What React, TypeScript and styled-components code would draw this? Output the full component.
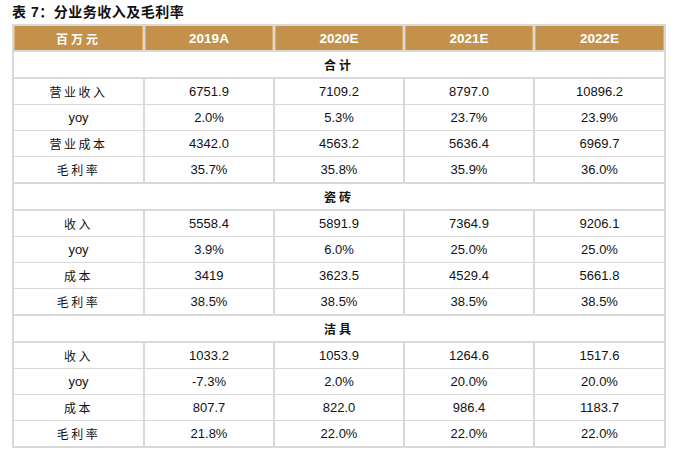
import React from 'react';
import styled, { createGlobalStyle } from 'styled-components';

const GlobalStyle = createGlobalStyle`
  body {
    margin: 0;
    background: #ffffff;
    font-family: "Liberation Sans", "Noto Sans CJK SC", sans-serif;
    color: #111;
  }
`;

const Page = styled.div`
  width: 680px;
  height: 465px;
  padding: 3px 0 0 12px;
  box-sizing: border-box;
`;

const Title = styled.div`
  font-family: "Liberation Sans", "Noto Sans CJK SC", sans-serif;
  font-weight: 700;
  font-size: 14px;
  line-height: 18px;
  height: 21px;
  letter-spacing: 0.5px;
  color: #111;
`;

const Table = styled.table`
  width: 652px;
  border-collapse: collapse;
  table-layout: fixed;
  border: 2px solid #d9d9d9;
`;

const Row = styled.tr`
  height: 26.4px;
`;

const HeadCell = styled.th`
  background: #c4914a;
  color: #ffffff;
  font-weight: 700;
  font-size: 13.5px;
  padding: 0;
  border: 2px solid #d9d9d9;
  border-top-width: 1px;
  text-align: center;
  box-shadow: inset 9px 0 0 -8px #dcae6e, inset -9px 0 0 -8px #dcae6e;
`;

const HeadLabel = styled.span<{ $cjk?: boolean }>`
  font-family: ${p => (p.$cjk ? '"Noto Sans CJK SC", sans-serif' : '"Liberation Sans", sans-serif')};
  font-size: ${p => (p.$cjk ? '12px' : '13.5px')};
  letter-spacing: ${p => (p.$cjk ? '3px' : '0')};
`;

const SectionCell = styled.td`
  text-align: center;
  font-family: "Noto Sans CJK SC", sans-serif;
  font-weight: 700;
  font-size: 12px;
  letter-spacing: 3px;
  padding: 0;
  border: 2px solid #d9d9d9;
  border-left: none;
  border-right: none;
`;

const Cell = styled.td<{ $label?: boolean }>`
  text-align: center;
  padding: 0;
  font-size: ${p => (p.$label ? '12px' : '13px')};
  font-family: ${p =>
    p.$label ? '"Liberation Sans", "Noto Sans CJK SC", sans-serif' : '"Liberation Sans", sans-serif'};
  letter-spacing: ${p => (p.$label ? '2.5px' : '0')};
  color: #111;
  border: 2px solid #d9d9d9;
  border-top-width: 1px;
  border-bottom-width: 1px;
`;

const years = ['2019A', '2020E', '2021E', '2022E'];

const sections: { name: string; rows: [string, string[]][] }[] = [
  {
    name: '合计',
    rows: [
      ['营业收入', ['6751.9', '7109.2', '8797.0', '10896.2']],
      ['yoy', ['2.0%', '5.3%', '23.7%', '23.9%']],
      ['营业成本', ['4342.0', '4563.2', '5636.4', '6969.7']],
      ['毛利率', ['35.7%', '35.8%', '35.9%', '36.0%']],
    ],
  },
  {
    name: '瓷砖',
    rows: [
      ['收入', ['5558.4', '5891.9', '7364.9', '9206.1']],
      ['yoy', ['3.9%', '6.0%', '25.0%', '25.0%']],
      ['成本', ['3419', '3623.5', '4529.4', '5661.8']],
      ['毛利率', ['38.5%', '38.5%', '38.5%', '38.5%']],
    ],
  },
  {
    name: '洁具',
    rows: [
      ['收入', ['1033.2', '1053.9', '1264.6', '1517.6']],
      ['yoy', ['-7.3%', '2.0%', '20.0%', '20.0%']],
      ['成本', ['807.7', '822.0', '986.4', '1183.7']],
      ['毛利率', ['21.8%', '22.0%', '22.0%', '22.0%']],
    ],
  },
];

export default function App() {
  return (
    <Page>
      <GlobalStyle />
      <Title>表 7：分业务收入及毛利率</Title>
      <Table>
        <colgroup>
          <col style={{ width: 131 }} />
          <col style={{ width: 130 }} />
          <col style={{ width: 130 }} />
          <col style={{ width: 130 }} />
          <col style={{ width: 131 }} />
        </colgroup>
        <thead>
          <Row>
            <HeadCell>
              <HeadLabel $cjk>百万元</HeadLabel>
            </HeadCell>
            {years.map(y => (
              <HeadCell key={y}>
                <HeadLabel>{y}</HeadLabel>
              </HeadCell>
            ))}
          </Row>
        </thead>
        <tbody>
          {sections.map(s => (
            <React.Fragment key={s.name}>
              <Row>
                <SectionCell colSpan={5}>{s.name}</SectionCell>
              </Row>
              {s.rows.map(([label, values]) => (
                <Row key={s.name + label}>
                  <Cell $label={label !== 'yoy'}>{label}</Cell>
                  {values.map((v, i) => (
                    <Cell key={i}>{v}</Cell>
                  ))}
                </Row>
              ))}
            </React.Fragment>
          ))}
        </tbody>
      </Table>
    </Page>
  );
}
